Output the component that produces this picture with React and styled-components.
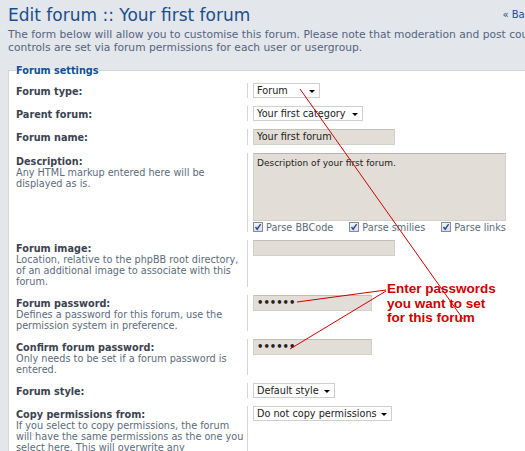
import React from "react";
import styled, { createGlobalStyle } from "styled-components";

const GlobalStyle = createGlobalStyle`
  html, body {
    margin: 0;
    padding: 0;
    background: #e3e6ea;
    overflow: hidden;
  }
  body {
    font-family: "DejaVu Sans", Verdana, sans-serif;
  }
`;

const Page = styled.div`
  position: relative;
  width: 528px;
  padding: 4px 0 0 8px;
`;

const Header = styled.div`
  display: flex;
  justify-content: space-between;
  align-items: flex-start;
`;

const Title = styled.h1`
  margin: 0;
  font-size: 17px;
  line-height: 22px;
  font-weight: normal;
  color: #1a4f8e;
`;

const BackLink = styled.a`
  margin-top: 5px;
  font-size: 10px;
  color: #1a4f8e;
  text-decoration: none;
  white-space: nowrap;
`;

const Intro = styled.p`
  margin: 2px 0 0;
  font-size: 10.7px;
  line-height: 13px;
  color: #536482;
  width: 545px;
`;

const Fieldset = styled.fieldset`
  margin: 11px 0 0;
  padding: 7px 7px 0;
  border: 1px solid #d3d6da;
  background: #fff;
  min-inline-size: auto;
`;

const Legend = styled.legend`
  padding: 0;
  font-size: 9.7px;
  font-weight: bold;
  color: #115098;
`;

const Row = styled.div`
  display: flex;
  align-items: flex-start;
  margin-bottom: 8px;
`;

const Term = styled.div`
  width: 229px;
  padding: 3px 2px 0 0;
  flex-shrink: 0;
  font-size: 9.7px;
  line-height: 11px;
`;

const Label = styled.div`
  font-weight: bold;
  color: #3b4350;
`;

const Explain = styled.div`
  color: #5b6b7b;
`;

const Def = styled.div`
  align-self: stretch;
  border-left: 1px solid #d6d6d6;
  padding-left: 5px;
`;

const Select = styled.div`
  display: flex;
  align-items: center;
  justify-content: space-between;
  box-sizing: border-box;
  width: ${(p) => p.$w}px;
  height: 15px;
  padding: 0 4px 0 3px;
  border: 1px solid #cfcfcf;
  background: #fff;
  font-size: 9.7px;
  color: #222;
`;

const Arrow = styled.span`
  width: 0;
  height: 0;
  margin-top: 2px;
  border-left: 3px solid transparent;
  border-right: 3px solid transparent;
  border-top: 3px solid #000;
`;

const Input = styled.div`
  box-sizing: border-box;
  width: ${(p) => p.$w}px;
  height: 16px;
  padding: 0 3px;
  border: 1px solid #d4d0c9;
  border-top-color: #c3bfb8;
  background: #e2ded7;
  font-size: ${(p) => (p.$secret ? "10px" : "9.7px")};
  font-weight: ${(p) => (p.$secret ? "bold" : "normal")};
  line-height: 14px;
  color: #222;
`;

const TextArea = styled.div`
  box-sizing: border-box;
  width: 253px;
  height: 68px;
  padding: 4px 3px;
  border: 1px solid #d4d0c9;
  border-top-color: #b9b5ae;
  background: #e2ded7;
  font-size: 9px;
  color: #222;
`;

const Checks = styled.div`
  display: flex;
  align-items: center;
  margin-top: 1px;
  height: 10px;
`;

const Check = styled.label`
  display: flex;
  align-items: center;
  gap: 3px;
  margin-right: 16px;
  font-size: 9.7px;
  color: #5b6b7b;
`;

const Box = styled.span`
  display: inline-flex;
  box-sizing: border-box;
  width: 10px;
  height: 10px;
  border: 1px solid #7b8ea8;
  background: linear-gradient(#f4f4f4, #dcdcdc);
`;

const Note = styled.div`
  position: absolute;
  left: 387px;
  top: 282px;
  font-family: "Liberation Sans", Arial, sans-serif;
  font-size: 13.5px;
  font-weight: bold;
  line-height: 14.5px;
  color: #d00000;
`;

const Overlay = styled.svg`
  position: absolute;
  left: 0;
  top: 0;
  pointer-events: none;
`;

function CheckItem({ children }) {
  return (
    <Check>
      <Box>
        <svg width="8" height="8" viewBox="0 0 8 8">
          <path d="M1.5 4 L3.2 6.2 L6.6 1.2" fill="none" stroke="#21489a" strokeWidth="1.4" />
        </svg>
      </Box>
      {children}
    </Check>
  );
}

function Field({ label, explain, children }) {
  return (
    <Row>
      <Term>
        <Label>{label}</Label>
        {explain && <Explain>{explain}</Explain>}
      </Term>
      <Def>{children}</Def>
    </Row>
  );
}

function Dropdown({ w, children }) {
  return (
    <Select $w={w}>
      <span>{children}</span>
      <Arrow />
    </Select>
  );
}

export default function App() {
  return (
    <>
      <GlobalStyle />
      <Page>
        <Header>
          <Title>Edit forum :: Your first forum</Title>
          <BackLink href="#">« Back</BackLink>
        </Header>
        <Intro>
          The form below will allow you to customise this forum. Please note that moderation and post count
          controls are set via forum permissions for each user or usergroup.
        </Intro>

        <Fieldset>
          <Legend>Forum settings</Legend>

          <Field label="Forum type:">
            <Dropdown w={67}>Forum</Dropdown>
          </Field>
          <Field label="Parent forum:">
            <Dropdown w={110}>Your first category</Dropdown>
          </Field>
          <Field label="Forum name:">
            <Input $w={142}>Your first forum</Input>
          </Field>
          <Field label="Description:" explain="Any HTML markup entered here will be displayed as is.">
            <TextArea>Description of your first forum.</TextArea>
            <Checks>
              <CheckItem>Parse BBCode</CheckItem>
              <CheckItem>Parse smilies</CheckItem>
              <CheckItem>Parse links</CheckItem>
            </Checks>
          </Field>
          <Field
            label="Forum image:"
            explain="Location, relative to the phpBB root directory, of an additional image to associate with this forum."
          >
            <Input $w={142} />
          </Field>
          <Field
            label="Forum password:"
            explain="Defines a password for this forum, use the permission system in preference."
          >
            <Input $w={119} $secret>••••••</Input>
          </Field>
          <Field
            label="Confirm forum password:"
            explain="Only needs to be set if a forum password is entered."
          >
            <Input $w={119} $secret>••••••</Input>
          </Field>
          <Field label="Forum style:">
            <Dropdown w={82}>Default style</Dropdown>
          </Field>
          <Field
            label="Copy permissions from:"
            explain="If you select to copy permissions, the forum will have the same permissions as the one you select here. This will overwrite any permissions you have previously set for this forum."
          >
            <Dropdown w={139}>Do not copy permissions</Dropdown>
          </Field>
        </Fieldset>

        <Note>
          Enter passwords
          <br />
          you want to set
          <br />
          for this forum
        </Note>

        <Overlay width="525" height="451" viewBox="0 0 525 451">
          <g stroke="#d00000" strokeWidth="1" fill="none">
            <line x1="300" y1="89" x2="463" y2="319" />
            <line x1="297" y1="302" x2="386" y2="290" />
            <line x1="290" y1="349" x2="386" y2="291" />
          </g>
        </Overlay>
      </Page>
    </>
  );
}
